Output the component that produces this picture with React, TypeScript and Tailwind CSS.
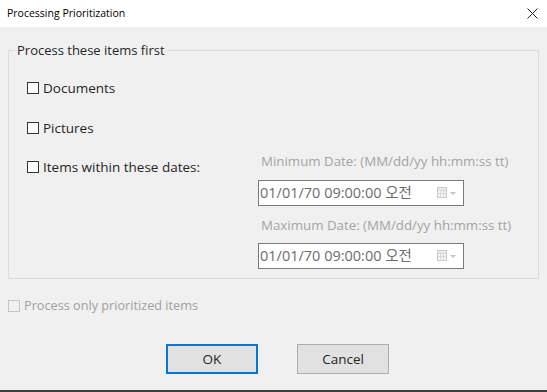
import React from "react";

const F = { fontFamily: '"Open Sans", "Noto Sans CJK KR", sans-serif' };

function Box({ disabled }: { disabled?: boolean }) {
  return (
    <span
      className={
        "inline-block w-[12px] h-[12px] shrink-0 border " +
        (disabled ? "border-[#c4c4c4] bg-[#f0f0f0]" : "border-[#333333] bg-white")
      }
    />
  );
}

function CalIcon() {
  return (
    <svg width="20" height="12" viewBox="0 0 20 12" className="shrink-0">
      <rect x="0.5" y="0.5" width="9" height="10" fill="#f4f4f4" stroke="#c8c8c8" />
      <line x1="0.5" y1="3" x2="9.5" y2="3" stroke="#c8c8c8" />
      <line x1="3.5" y1="3" x2="3.5" y2="10.5" stroke="#dadada" />
      <line x1="6.5" y1="3" x2="6.5" y2="10.5" stroke="#dadada" />
      <line x1="0.5" y1="6.5" x2="9.5" y2="6.5" stroke="#dadada" />
      <path d="M13 5 L19 5 L16 8 Z" fill="#c4c4c4" />
    </svg>
  );
}

function DateInput() {
  return (
    <div className="flex items-center w-[206px] h-[26px] border border-[#7a7a7a] bg-white pl-[1px] pr-[6px]">
      <span className="text-[14.5px] text-[#6d6d6d] leading-none flex-1 whitespace-nowrap">01/01/70 09:00:00 오전</span>
      <CalIcon />
    </div>
  );
}

export default function App() {
  return (
    <div className="w-[547px] h-[392px] bg-[#f0f0f0] flex flex-col overflow-hidden" style={F}>
      <div className="h-[27px] bg-white flex items-center justify-between pl-[7px] pr-[9px] shrink-0">
        <span className="text-[10.5px] text-black">Processing Prioritization</span>
        <svg width="11" height="11" viewBox="0 0 11 11">
          <path d="M0.5 0.5 L10.5 10.5 M10.5 0.5 L0.5 10.5" stroke="#222" strokeWidth="1" />
        </svg>
      </div>
      <div className="flex-1 flex flex-col">
        <fieldset className="mt-[13px] ml-[8px] w-[531px] h-[239px] border border-[#dcdcdc] pl-[18px]">
          <legend className="ml-[-12px] px-[2px] text-[13px] text-[#262626] leading-[20px]">Process these items first</legend>
          <div className="mt-[18px] flex items-center gap-[4px] h-[20px] text-[13.5px] text-[#262626]">
            <Box />
            <span>Documents</span>
          </div>
          <div className="mt-[20px] flex items-center gap-[4px] h-[20px] text-[13.5px] text-[#262626]">
            <Box />
            <span>Pictures</span>
          </div>
          <div className="mt-[14px] flex">
            <div className="w-[231px] mt-[5px] flex items-center gap-[4px] h-[20px] text-[13.5px] text-[#262626]">
              <Box />
              <span>Items within these dates:</span>
            </div>
            <div className="flex flex-col">
              <div className="h-[20px] flex items-center pl-[3px] text-[13.3px] text-[#a4a4a4] whitespace-nowrap">Minimum Date: (MM/dd/yy hh:mm:ss tt)</div>
              <div className="mt-[8px]"><DateInput /></div>
              <div className="mt-[10px] h-[20px] flex items-center pl-[3px] text-[13.3px] text-[#a4a4a4] whitespace-nowrap">Maximum Date: (MM/dd/yy hh:mm:ss tt)</div>
              <div className="mt-[7px]"><DateInput /></div>
            </div>
          </div>
        </fieldset>
        <div className="mt-[17px] ml-[8px] flex items-center gap-[4px] h-[20px] text-[12.7px] text-[#a0a0a0]">
          <Box disabled />
          <span>Process only prioritized items</span>
        </div>
        <div className="mt-[28px] pl-[166px] flex gap-[39px]">
          <button className="w-[92px] h-[30px] bg-[#e1e1e1] border-2 border-[#0078d7] text-[13.5px] text-[#262626]">OK</button>
          <button className="w-[92px] h-[30px] bg-[#e1e1e1] border border-[#adadad] text-[13.5px] text-[#262626]">Cancel</button>
        </div>
      </div>
      <div className="h-[2px] bg-[#3c3c3c] shrink-0" />
    </div>
  );
}
